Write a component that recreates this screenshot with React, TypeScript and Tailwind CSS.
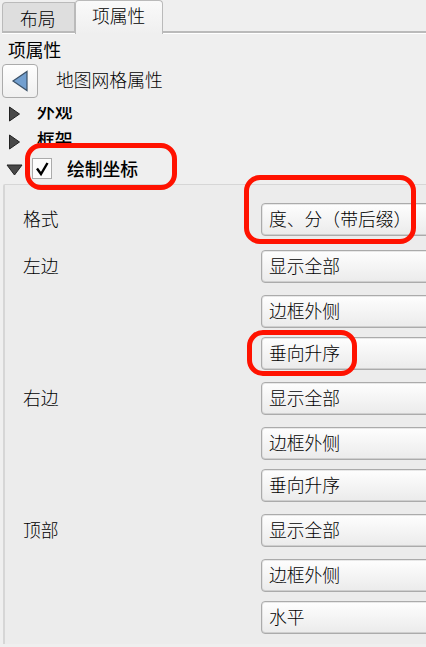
type Field = { label?: string; value: string; gap: string };

const fields: Field[] = [
  { label: '格式', value: '度、分（带后缀）', gap: 'mt-[18px]' },
  { label: '左边', value: '显示全部', gap: 'mt-[14px]' },
  { value: '边框外侧', gap: 'mt-[12px]' },
  { value: '垂向升序', gap: 'mt-[9px]' },
  { label: '右边', value: '显示全部', gap: 'mt-[12px]' },
  { value: '边框外侧', gap: 'mt-[12px]' },
  { value: '垂向升序', gap: 'mt-[9px]' },
  { label: '顶部', value: '显示全部', gap: 'mt-[12px]' },
  { value: '边框外侧', gap: 'mt-[12px]' },
  { value: '水平', gap: 'mt-[9px]' },
];

function FieldRow({ label, value, gap }: Field) {
  return (
    <div className={`flex h-[33px] shrink-0 ${gap}`}>
      <div className="w-[256px] shrink-0 pl-[18px] leading-[31px]">{label}</div>
      <div className="h-[33px] w-[180px] shrink-0 whitespace-nowrap rounded-[4px] border border-[#ababab] bg-linear-to-b from-[#fefefe] to-[#ebebeb] pl-[7px] leading-[29px] shadow-[inset_0_0_0_1px_#d2d2d280,inset_0_-1px_0_#cccccc]">
        {value}
      </div>
    </div>
  );
}

function Collapsed() {
  return (
    <svg className="block" width="13" height="16" viewBox="0 0 13 16">
      <path d="M1.5 1V15L11.5 8Z" fill="#484848" stroke="#222" strokeWidth="1" />
    </svg>
  );
}

export default function App() {
  return (
    <div className="relative flex h-[647px] w-[426px] flex-col overflow-hidden bg-[#efefef] font-['Noto_Sans_CJK_SC',sans-serif] text-[17.8px] font-light text-black">
      <div className="flex h-[34px] shrink-0 items-end pl-[2px]">
        <div className="flex h-[34px] w-[73px] flex-col justify-end">
          <div className="h-[29px] rounded-tl-[4px] border border-b-0 border-[#bababa] bg-[#dedede] pl-[17px] leading-[30px]">布局</div>
          <div className="h-[2px] bg-[#bababa]" />
          <div className="h-px bg-white" />
        </div>
        <div className="h-[34px] w-[88px] rounded-t-[4px] border border-b-0 border-[#bababa] bg-linear-to-b from-[#fafafa] to-[#efefef] pl-[16px] leading-[29px]">项属性</div>
        <div className="h-[3px] flex-1 border-b border-t-2 border-b-white border-t-[#bababa]" />
      </div>
      <div className="h-[30px] shrink-0 pl-[8px] leading-[30px] font-normal">项属性</div>
      <div className="flex h-[34px] shrink-0 pl-[2px]">
        <div className="flex w-[36px] items-center justify-center rounded-[4px] border border-[#ababab] bg-linear-to-b from-[#fefefe] to-[#f0f0f0]">
          <svg width="18" height="22" viewBox="0 0 18 22">
            <path d="M16 1.5V20.5L2 11Z" fill="#729fcf" stroke="#3b5269" strokeWidth="1.2" />
          </svg>
        </div>
        <div className="pl-[18px] leading-[30px]">地图网格属性</div>
      </div>
      <div className="mt-[9px] flex h-[14px] shrink-0 items-center pl-[8px] font-medium">
        <Collapsed />
        <div className="ml-[16px] flex h-[14px] items-end overflow-hidden">
          <span className="pb-[2px] leading-[18px]">外观</span>
        </div>
      </div>
      <div className="mt-[9px] flex h-[23px] shrink-0 pl-[8px] font-medium">
        <div className="pt-[4px]"><Collapsed /></div>
        <div className="ml-[16px] h-[14px] overflow-hidden leading-[18px]">框架</div>
      </div>
      <div className="flex h-[31px] shrink-0 items-center pl-[6px] font-medium">
        <svg className="mt-[2px]" width="17" height="12" viewBox="0 0 17 12">
          <path d="M1 1H16L8.5 11Z" fill="#484848" stroke="#222" strokeWidth="1" />
        </svg>
        <div className="ml-[9px] h-[21px] w-[20px] border border-[#ababab] bg-[#fdfdfd]">
          <svg width="18" height="19" viewBox="0 0 18 19">
            <path d="M4 9.5L8 15L14.5 4" fill="none" stroke="black" strokeWidth="2.4" />
          </svg>
        </div>
        <div className="ml-[15px] -mt-px leading-[26px]">绘制坐标</div>
      </div>
      <div className="ml-[3px] h-[460px] shrink-0 rounded-tl-[2px] border-l-2 border-t border-[#d6d6d6] bg-[#ececec]">
        <div className="flex flex-col">
          {fields.map((field, i) => <FieldRow key={i} {...field} />)}
        </div>
      </div>
      <div className="absolute left-[25px] top-[143px] h-[47px] w-[152px] rounded-[16px] border-[5px] border-[#ff1200]" />
      <div className="absolute left-[244px] top-[175px] h-[69px] w-[172px] rounded-[16px] border-[5px] border-[#ff1200]" />
      <div className="absolute left-[247px] top-[330px] h-[46px] w-[110px] rounded-[16px] border-[5px] border-[#ff1200]" />
    </div>
  );
}
